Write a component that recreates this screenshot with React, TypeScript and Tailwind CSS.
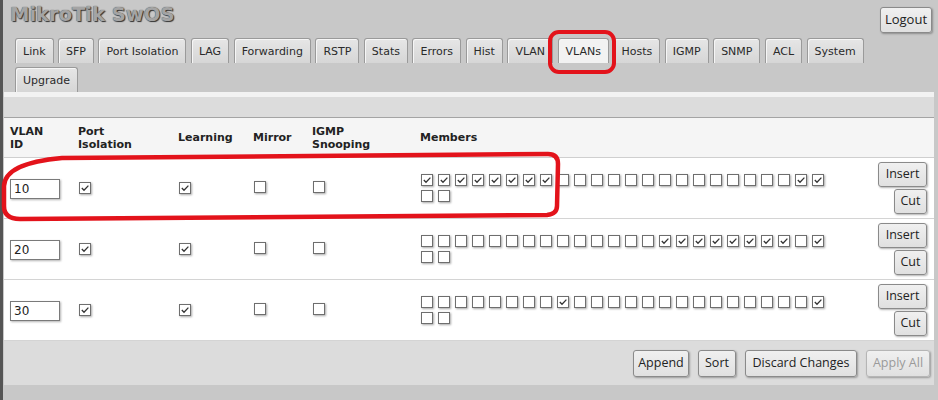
import React from "react";

type Row = { id: string; iso: boolean; learn: boolean; mirror: boolean; igmp: boolean; members: number[] };

const tabsTop = ["Link", "SFP", "Port Isolation", "LAG", "Forwarding", "RSTP", "Stats", "Errors", "Hist", "VLAN", "VLANs", "Hosts", "IGMP", "SNMP", "ACL", "System"];

const rows: Row[] = [
  { id: "10", iso: true, learn: true, mirror: false, igmp: false, members: [0, 1, 2, 3, 4, 5, 6, 7, 22, 23] },
  { id: "20", iso: true, learn: true, mirror: false, igmp: false, members: [14, 15, 16, 17, 18, 19, 20, 21, 23] },
  { id: "30", iso: true, learn: true, mirror: false, igmp: false, members: [8, 23] },
];

const cols = "grid grid-cols-[68px_100px_75px_59px_108px_1fr_auto] items-center pl-[6px] pr-[7px]";

function Box({ checked }: { checked?: boolean }) {
  return (
    <span className="inline-flex h-[12px] w-[12px] shrink-0 items-center justify-center border border-[#6e6e6e] bg-white shadow-[1px_1px_2px_rgba(0,0,0,0.35)]">
      {checked && (
        <svg width="10" height="10" viewBox="0 0 10 10">
          <path d="M1.8 5 L4 7.2 L8.4 2.6" fill="none" stroke="#333" strokeWidth="1.3" />
        </svg>
      )}
    </span>
  );
}

function Btn({ children, w, h = "h-[25px]", disabled }: { children: React.ReactNode; w: string; h?: string; disabled?: boolean }) {
  return (
    <button
      type="button"
      className={`${w} ${h} flex items-center justify-center rounded-[3px] border bg-gradient-to-b from-[#f0f0f0] to-[#e0e0e0] text-[12.5px] shadow-[1px_1px_2px_rgba(0,0,0,0.3)] ${
        disabled ? "border-[#b5b5b5] text-[#9a9a9a]" : "border-[#8a8a8a] text-[#222]"
      }`}
      style={{ fontFamily: '"Open Sans", "Liberation Sans", sans-serif' }}
    >
      {children}
    </button>
  );
}

function Tab({ label, active }: { label: string; active?: boolean }) {
  return (
    <div
      className={`flex h-[25px] items-center rounded-t-[3px] border border-b-0 border-[#9a9a9a] px-[7px] pt-[2px] text-[11px] text-[#2a2a2a] shadow-[inset_1px_1px_0_#f6f6f6] ${
        active ? "bg-[#f2f2f2]" : "bg-gradient-to-b from-[#e6e6e6] to-[#d6d6d6]"
      }`}
    >
      {label}
    </div>
  );
}

export default function App() {
  return (
    <div className="relative h-[400px] w-[938px] overflow-hidden" style={{ fontFamily: '"DejaVu Sans", Verdana, sans-serif' }}>
      <div className="flex h-full flex-col border-l-[3px] border-[#555] bg-[#c8c8c8]">
        {/* header */}
        <div className="flex h-[38px] items-start justify-between">
          <div className="mt-[3px] pl-[7px] text-[19.5px] font-bold leading-[24px] text-[#a4a4a4] [text-shadow:0_0_1px_#3a3a3a,1px_1px_1px_#333]">
            MikroTik SwOS
          </div>
          <div className="mr-[6px] mt-[7px]">
            <Btn w="w-[52px]" h="h-[26px]">
              <span className="text-[13px]">Logout</span>
            </Btn>
          </div>
        </div>

        {/* tabs */}
        <div className="flex flex-col gap-[4px] pl-[12px]">
          <div className="flex gap-[4.5px]">
            {tabsTop.map((t) => (
              <Tab key={t} label={t} active={t === "VLANs"} />
            ))}
          </div>
          <div className="flex">
            <Tab label="Upgrade" />
          </div>
        </div>

        {/* panel */}
        <div className="ml-[1px] mr-[4px] flex flex-col">
          <div className="h-[5px] bg-[#f2f2f2]" />
          <div className="h-[21px] border-b border-[#a4a4a4] bg-[#dcdcdc]" />

          <div className={`${cols} h-[40px] border-b border-[#cfcfcf] bg-[#f5f5f5] text-[11px] font-bold leading-[13px] text-[#222]`}>
            <div>VLAN<br />ID</div>
            <div>Port<br />Isolation</div>
            <div>Learning</div>
            <div>Mirror</div>
            <div>IGMP<br />Snooping</div>
            <div>Members</div>
            <div />
          </div>

          {rows.map((r) => (
            <div key={r.id} className={`${cols} h-[61px] border-b border-[#d4d4d4] bg-white`}>
              <div>
                <input
                  readOnly
                  value={r.id}
                  className="h-[20px] w-[50px] border border-[#7a7a7a] bg-white px-[3px] text-[12px] text-[#222] shadow-[1px_1px_2px_rgba(0,0,0,0.3)] outline-none"
                />
              </div>
              <div className="pl-[1px]"><Box checked={r.iso} /></div>
              <div className="pl-[1px]"><Box checked={r.learn} /></div>
              <div className="pl-[1px]"><Box checked={r.mirror} /></div>
              <div className="pl-[1px]"><Box checked={r.igmp} /></div>
              <div className="flex w-[410px] flex-wrap gap-x-[5px] gap-y-[4px] pl-[1px]">
                {Array.from({ length: 26 }, (_, i) => (
                  <Box key={i} checked={r.members.includes(i)} />
                ))}
              </div>
              <div className="flex flex-col items-end gap-[2px]">
                <Btn w="w-[49px]">Insert</Btn>
                <Btn w="w-[33px]">Cut</Btn>
              </div>
            </div>
          ))}

          <div className="flex h-[44px] items-center justify-end gap-[9px] bg-[#dcdcdc] pr-[4px]">
            <Btn w="w-[56px]" h="h-[27px]">Append</Btn>
            <Btn w="w-[38px]" h="h-[27px]">Sort</Btn>
            <Btn w="w-[112px]" h="h-[27px]">Discard Changes</Btn>
            <Btn w="w-[64px]" h="h-[27px]" disabled>Apply All</Btn>
          </div>
        </div>
      </div>

      {/* red annotations */}
      <div className="pointer-events-none absolute left-[548px] top-[30px] h-[44px] w-[68px] rounded-[11px] border-[4px] border-[#e3131b]" />
      <svg className="pointer-events-none absolute left-0 top-0" width="938" height="400" viewBox="0 0 938 400">
        <path
          d="M62 158 L548 154 Q558 154 558 164 L557 206 Q557 214 547 215 L20 219 Q4 219 4 206 L4 186 Q5 163 62 158 Z"
          fill="none"
          stroke="#e3131b"
          strokeWidth="4.5"
          strokeLinejoin="round"
        />
      </svg>
    </div>
  );
}
